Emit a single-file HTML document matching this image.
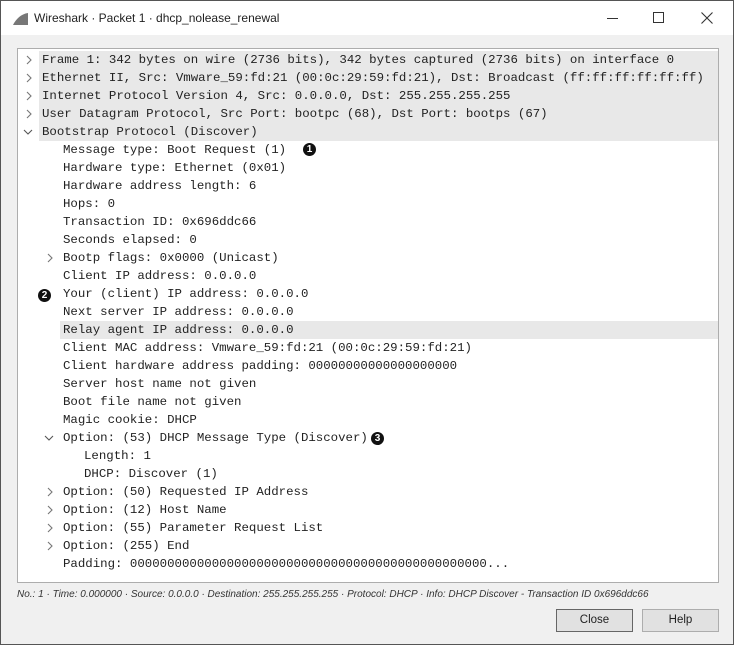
<!DOCTYPE html>
<html><head><style>
*{margin:0;padding:0;box-sizing:border-box}
body{width:734px;height:645px;overflow:hidden;background:#fff;position:relative;font-family:"Liberation Sans",sans-serif}
.win{position:absolute;left:0;top:0;width:734px;height:645px;border:1px solid #555;background:#f0f0f0}
.title{position:absolute;left:0;top:0;width:732px;height:34px;background:#fff}
.title .t{position:absolute;left:33px;top:10px;font-size:12px;color:#222}
.tree{position:absolute;left:16px;top:47px;width:702px;height:535px;border:1px solid #adadad;background:#fff}
.row{position:absolute;left:0;height:18px;width:700px;font-family:"Liberation Mono",monospace;font-size:12.4px;line-height:18px;color:#222;white-space:pre}
.row.h .bg{position:absolute;left:21px;right:0;top:0;bottom:0;background:#e8e8e8}
.row span.tx{position:absolute;top:0}
.arr{position:absolute;top:0}
.c{display:inline-block;width:13px;height:13px;border-radius:50%;background:#111;color:#fff;font:bold 10px/13px "Liberation Sans",sans-serif;text-align:center;position:absolute}
.status{position:absolute;left:16px;top:588px;font-size:10px;font-style:italic;color:#333}
.btn{position:absolute;top:608px;width:77px;height:23px;background:#e1e1e1;border:1px solid #adadad;font-size:11.5px;text-align:center;line-height:21px;color:#222}
</style></head><body>
<svg width="0" height="0" style="position:absolute"><defs>
<symbol id="r" viewBox="0 0 10 18"><path d="M3 5 L7 9 L3 13" fill="none" stroke="#777" stroke-width="1.1"/></symbol>
<symbol id="d" viewBox="0 0 10 18"><path d="M1 7 L5 11 L9 7" fill="none" stroke="#555" stroke-width="1.1"/></symbol>
</defs></svg>
<div class="win">
<div class="title">
<svg style="position:absolute;left:11px;top:11px" width="17" height="14"><path d="M1 13 C4 7 9 2 16 1 L16 13 Z" fill="#777"/></svg>
<div class="t">Wireshark · Packet 1 · dhcp_nolease_renewal</div>
<div style="position:absolute;left:606px;top:17px;width:11px;height:1px;background:#333"></div>
<div style="position:absolute;left:652px;top:11px;width:11px;height:11px;border:1px solid #333"></div>
<svg style="position:absolute;left:700px;top:11px" width="12" height="12"><path d="M0.5 0.5L11.5 11.5M11.5 0.5L0.5 11.5" stroke="#333" stroke-width="1.1"/></svg>
</div>
<div class="tree">
<div class="row h" style="top:2px"><div class="bg"></div><svg class="arr" style="left:6px" width="10" height="18"><use href="#r"/></svg><span class="tx" style="left:24px">Frame 1: 342 bytes on wire (2736 bits), 342 bytes captured (2736 bits) on interface 0</span></div>
<div class="row h" style="top:20px"><div class="bg"></div><svg class="arr" style="left:6px" width="10" height="18"><use href="#r"/></svg><span class="tx" style="left:24px">Ethernet II, Src: Vmware_59:fd:21 (00:0c:29:59:fd:21), Dst: Broadcast (ff:ff:ff:ff:ff:ff)</span></div>
<div class="row h" style="top:38px"><div class="bg"></div><svg class="arr" style="left:6px" width="10" height="18"><use href="#r"/></svg><span class="tx" style="left:24px">Internet Protocol Version 4, Src: 0.0.0.0, Dst: 255.255.255.255</span></div>
<div class="row h" style="top:56px"><div class="bg"></div><svg class="arr" style="left:6px" width="10" height="18"><use href="#r"/></svg><span class="tx" style="left:24px">User Datagram Protocol, Src Port: bootpc (68), Dst Port: bootps (67)</span></div>
<div class="row h" style="top:74px"><div class="bg"></div><svg class="arr" style="left:5px" width="10" height="18"><use href="#d"/></svg><span class="tx" style="left:24px">Bootstrap Protocol (Discover)</span></div>
<div class="row" style="top:92px"><span class="tx" style="left:45px">Message type: Boot Request (1)</span><span class="c" style="left:285px;top:2px">1</span></div>
<div class="row" style="top:110px"><span class="tx" style="left:45px">Hardware type: Ethernet (0x01)</span></div>
<div class="row" style="top:128px"><span class="tx" style="left:45px">Hardware address length: 6</span></div>
<div class="row" style="top:146px"><span class="tx" style="left:45px">Hops: 0</span></div>
<div class="row" style="top:164px"><span class="tx" style="left:45px">Transaction ID: 0x696ddc66</span></div>
<div class="row" style="top:182px"><span class="tx" style="left:45px">Seconds elapsed: 0</span></div>
<div class="row" style="top:200px"><svg class="arr" style="left:27px" width="10" height="18"><use href="#r"/></svg><span class="tx" style="left:45px">Bootp flags: 0x0000 (Unicast)</span></div>
<div class="row" style="top:218px"><span class="tx" style="left:45px">Client IP address: 0.0.0.0</span></div>
<div class="row" style="top:236px"><span class="c" style="left:20px;top:4px">2</span><span class="tx" style="left:45px">Your (client) IP address: 0.0.0.0</span></div>
<div class="row" style="top:254px"><span class="tx" style="left:45px">Next server IP address: 0.0.0.0</span></div>
<div class="row h" style="top:272px"><div class="bg" style="left:42px"></div><span class="tx" style="left:45px">Relay agent IP address: 0.0.0.0</span></div>
<div class="row" style="top:290px"><span class="tx" style="left:45px">Client MAC address: Vmware_59:fd:21 (00:0c:29:59:fd:21)</span></div>
<div class="row" style="top:308px"><span class="tx" style="left:45px">Client hardware address padding: 00000000000000000000</span></div>
<div class="row" style="top:326px"><span class="tx" style="left:45px">Server host name not given</span></div>
<div class="row" style="top:344px"><span class="tx" style="left:45px">Boot file name not given</span></div>
<div class="row" style="top:362px"><span class="tx" style="left:45px">Magic cookie: DHCP</span></div>
<div class="row" style="top:380px"><svg class="arr" style="left:26px" width="10" height="18"><use href="#d"/></svg><span class="tx" style="left:45px">Option: (53) DHCP Message Type (Discover)</span><span class="c" style="left:353px;top:3px">3</span></div>
<div class="row" style="top:398px"><span class="tx" style="left:66px">Length: 1</span></div>
<div class="row" style="top:416px"><span class="tx" style="left:66px">DHCP: Discover (1)</span></div>
<div class="row" style="top:434px"><svg class="arr" style="left:27px" width="10" height="18"><use href="#r"/></svg><span class="tx" style="left:45px">Option: (50) Requested IP Address</span></div>
<div class="row" style="top:452px"><svg class="arr" style="left:27px" width="10" height="18"><use href="#r"/></svg><span class="tx" style="left:45px">Option: (12) Host Name</span></div>
<div class="row" style="top:470px"><svg class="arr" style="left:27px" width="10" height="18"><use href="#r"/></svg><span class="tx" style="left:45px">Option: (55) Parameter Request List</span></div>
<div class="row" style="top:488px"><svg class="arr" style="left:27px" width="10" height="18"><use href="#r"/></svg><span class="tx" style="left:45px">Option: (255) End</span></div>
<div class="row" style="top:506px"><span class="tx" style="left:45px">Padding: 000000000000000000000000000000000000000000000000...</span></div>
</div>
<div class="status">No.: 1 · Time: 0.000000 · Source: 0.0.0.0 · Destination: 255.255.255.255 · Protocol: DHCP · Info: DHCP Discover - Transaction ID 0x696ddc66</div>
<div class="btn" style="left:555px;border-color:#666">Close</div>
<div class="btn" style="left:641px">Help</div>
</div>
</body></html>
